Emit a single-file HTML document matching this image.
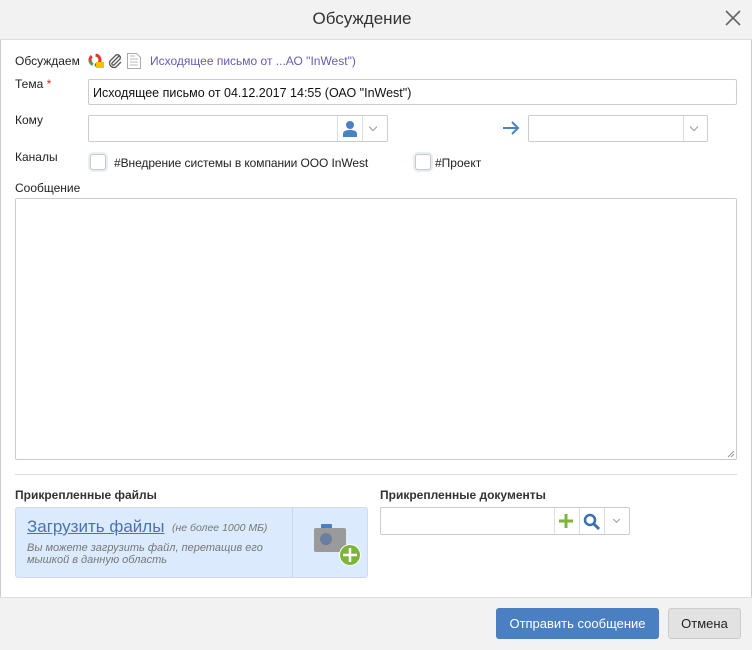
<!DOCTYPE html>
<html><head><meta charset="utf-8"><style>
*{box-sizing:border-box;margin:0;padding:0}
body{width:752px;height:650px;background:#fff;font-family:"Liberation Sans",Arial,sans-serif;font-size:12px;color:#222;position:relative;overflow:hidden}
.a{position:absolute}
.inp{position:absolute;border:1px solid #ccc;border-radius:2px;background:#fff}
.lbl{position:absolute;left:15px;font-size:12px;color:#222}
.cb{position:absolute;width:16px;height:16px;border:1px solid #c8c8c8;border-radius:3px;background:#fff;box-shadow:0 0 0 2px #e8eef5}
.vl{position:absolute;top:0;bottom:0;width:1px;background:#ddd}
.chev{position:absolute;width:6px;height:6px;border-right:1.5px solid #999;border-bottom:1.5px solid #999;transform:rotate(45deg)}
</style></head><body>
<div class="a" style="left:0;top:0;width:752px;height:40px;background:#f2f2f2;border-bottom:1px solid #ddd"></div>
<div class="a" style="left:311px;top:9px;width:102px;text-align:center;font-size:17px;color:#333;white-space:nowrap">Обсуждение</div>
<svg class="a" style="left:725px;top:10px" width="16" height="16"><path d="M1 1L15 15M15 1L1 15" stroke="#666" stroke-width="1.6"/></svg>
<div class="a" style="left:0;top:40px;width:1px;height:560px;background:#ccc"></div>
<div class="a" style="right:0;top:40px;width:1px;height:560px;background:#ccc"></div>

<div class="lbl" style="top:54px">Обсуждаем</div>
<svg class="a" style="left:88px;top:53px" width="16" height="16"><circle cx="7" cy="7" r="5" fill="none" stroke="#e33" stroke-width="3" stroke-dasharray="8 4"/><circle cx="7" cy="7" r="5" fill="none" stroke="#3a6" stroke-width="3" stroke-dasharray="4 20" stroke-dashoffset="-10"/><rect x="8" y="9" width="8" height="6" fill="#f4c300"/></svg>
<svg class="a" style="left:107px;top:53px" width="16" height="16"><path d="M12 3L5 10a1.5 1.5 0 0 0 2 2l6-6a3 3 0 0 0-4-4L3 8a4.5 4.5 0 0 0 6 6l5-5" fill="none" stroke="#555" stroke-width="1.3"/></svg>
<svg class="a" style="left:126px;top:52px" width="16" height="18"><path d="M1.5 1.5h9l4 4v11h-13z" fill="#fff" stroke="#aaa"/><path d="M4 7h8M4 10h8M4 13h8M4 4h5" stroke="#bbb"/></svg>
<div class="a" style="left:150px;top:54px;color:#6a58b8;font-size:12px">Исходящее письмо от ...АО "InWest")</div>

<div class="lbl" style="top:77px">Тема <span style="color:#d22">*</span></div>
<div class="inp" style="left:88px;top:79px;width:649px;height:26px"></div>
<div class="a" style="left:93px;top:86px;font-size:12.5px;color:#111">Исходящее письмо от 04.12.2017 14:55 (ОАО "InWest")</div>

<div class="lbl" style="top:113px">Кому</div>
<div class="inp" style="left:88px;top:115px;width:300px;height:27px">
<div class="vl" style="left:248px"></div><div class="vl" style="left:273px"></div>
<svg class="a" style="left:253px;top:4px" width="16" height="17"><circle cx="8" cy="5" r="4" fill="#4a80c4"/><path d="M1 17v-3c0-3 3-4 7-4s7 1 7 4v3z" fill="#4a80c4"/></svg>
<div class="chev" style="left:281px;top:8px"></div>
</div>
<svg class="a" style="left:502px;top:121px" width="18" height="14"><path d="M1 7h15M10 1l6 6-6 6" fill="none" stroke="#4a80c4" stroke-width="2"/></svg>
<div class="inp" style="left:528px;top:115px;width:180px;height:27px"><div class="vl" style="left:154px"></div><div class="chev" style="left:162px;top:8px"></div></div>

<div class="lbl" style="top:150px">Каналы</div>
<div class="cb" style="left:90px;top:154px"></div>
<div class="a" style="left:114px;top:156px;font-size:12px;letter-spacing:-0.08px">#Внедрение системы в компании ООО InWest</div>
<div class="cb" style="left:415px;top:154px"></div>
<div class="a" style="left:435px;top:156px;font-size:12px">#Проект</div>

<div class="lbl" style="top:181px">Сообщение</div>
<div class="inp" style="left:15px;top:198px;width:722px;height:262px"></div>
<svg class="a" style="left:727px;top:450px" width="8" height="8"><path d="M7 1L1 7M7 4L4 7" stroke="#999"/></svg>

<div class="a" style="left:15px;top:474px;width:722px;height:1px;background:#ddd"></div>
<div class="a" style="left:15px;top:488px;font-weight:bold;color:#333">Прикрепленные файлы</div>
<div class="a" style="left:380px;top:488px;font-weight:bold;color:#333">Прикрепленные документы</div>
<div class="a" style="left:15px;top:507px;width:353px;height:71px;background:#dbeafc;border:1px solid #cfdbea;border-radius:3px">
<div class="vl" style="left:276px;background:#c9d6e6"></div>
<div class="a" style="left:11px;top:9px;font-size:17px;color:#4a74b0;text-decoration:underline">Загрузить файлы</div>
<div class="a" style="left:156px;top:14px;font-size:10.5px;font-style:italic;color:#777">(не более 1000 МБ)</div>
<div class="a" style="left:11px;top:34px;font-size:11px;font-style:italic;color:#777;line-height:12px">Вы можете загрузить файл, перетащив его<br>мышкой в данную область</div>
<svg class="a" style="left:296px;top:14px" width="50" height="46"><rect x="9" y="2" width="11" height="6" rx="1" fill="#4a80c4"/><rect x="2" y="6" width="32" height="24" rx="2" fill="#9a9a9a"/><circle cx="14" cy="17" r="6" fill="#6b7ea0"/><circle cx="38" cy="33" r="11" fill="#fff"/><circle cx="38" cy="33" r="10" fill="#7cb53a"/><path d="M38 26v14M31 33h14" stroke="#fff" stroke-width="2.5"/></svg>
</div>
<div class="inp" style="left:380px;top:507px;width:250px;height:28px">
<div class="vl" style="left:173px"></div><div class="vl" style="left:198px"></div><div class="vl" style="left:223px"></div>
<svg class="a" style="left:177px;top:5px" width="16" height="16"><path d="M8 1v14M1 8h14" stroke="#7cb53a" stroke-width="3"/></svg>
<svg class="a" style="left:202px;top:5px" width="18" height="18"><circle cx="7" cy="7" r="5" fill="none" stroke="#3b6eb5" stroke-width="2.5"/><path d="M11 11l5 5" stroke="#3b6eb5" stroke-width="3"/></svg>
<div class="chev" style="left:233px;top:9px;width:5px;height:5px"></div>
</div>

<div class="a" style="left:0;top:597px;width:752px;height:53px;background:#f2f2f2;border-top:1px solid #ddd"></div>
<div class="a" style="left:496px;top:608px;width:163px;height:31px;background:#4a7fc1;border-radius:3px;color:#fff;font-size:13px;text-align:center;line-height:31px">Отправить сообщение</div>
<div class="a" style="left:668px;top:608px;width:73px;height:31px;background:#e2e2e2;border:1px solid #ccc;border-radius:3px;color:#222;font-size:13px;text-align:center;line-height:29px">Отмена</div>
</body></html>
